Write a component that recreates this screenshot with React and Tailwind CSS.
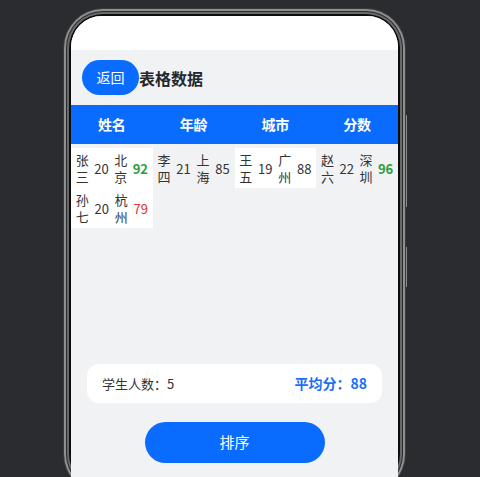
const rows = [
  { name: '张三', age: 20, city: '北京', score: 92 },
  { name: '李四', age: 21, city: '上海', score: 85 },
  { name: '王五', age: 19, city: '广州', score: 88 },
  { name: '赵六', age: 22, city: '深圳', score: 96 },
  { name: '孙七', age: 20, city: '杭州', score: 79 },
];

const font = { fontFamily: '"Noto Sans CJK SC", "Noto Sans", sans-serif' };

function scoreClass(s) {
  if (s >= 90) return 'text-[#2a9d3f] font-bold';
  if (s < 80) return 'text-[#e5322d]';
  return 'text-[#333]';
}

export default function App() {
  const avg = Math.round(rows.reduce((a, r) => a + r.score, 0) / rows.length);

  return (
    <div className="w-[480px] h-[477px] bg-[#2b2c30] overflow-hidden pt-[8px]" style={font}>
      <div className="relative ml-[63px] w-[343px]">
        {/* side keys */}
        <div className="absolute right-[-1px] top-[107px] w-[1px] h-[92px] bg-[#8a8b8e]" />
        <div className="absolute right-[-1px] top-[239px] w-[1px] h-[40px] bg-[#8a8b8e]" />

        <div className="rounded-[40px] p-[1px] bg-[#3a3b3e]">
          <div className="rounded-[39px] p-[2px] bg-[#8e8f91]">
            <div className="rounded-[37px] p-[1px] bg-[#2a2a2b]">
              <div className="rounded-[36px] p-[2px] bg-[#6a6a6c]">
                <div className="rounded-[34px] p-[2px] bg-[#0d0d0d]">
                  <div className="rounded-t-[31px] overflow-hidden bg-[#f1f2f4] h-[470px]">
                    <div className="h-[34px] bg-white" />

                    <div className="flex items-center mt-[10px] px-[11px]">
                      <button className="h-[35px] w-[57px] rounded-full bg-[#0a6cff] text-white text-[14px]">返回</button>
                      <span className="text-[16px] font-bold text-[#24272b]">表格数据</span>
                    </div>

                    <div className="mt-[10px] h-[39px] bg-[#0a6cff] grid grid-cols-4 items-center">
                      {['姓名', '年龄', '城市', '分数'].map((h) => (
                        <div key={h} className="text-center text-white text-[14px] font-bold">{h}</div>
                      ))}
                    </div>

                    <div className="mt-[4px] grid grid-cols-4">
                      {rows.map((r, i) => (
                        <div
                          key={r.name}
                          className={`h-[40px] flex items-center justify-around px-[2px] text-[13px] leading-[17px] text-[#333] ${i % 2 === 0 ? 'bg-white' : ''}`}
                        >
                          <span className="w-[13px] break-all">{r.name}</span>
                          <span>{r.age}</span>
                          <span className="w-[13px] break-all">{r.city}</span>
                          <span className={scoreClass(r.score)}>{r.score}</span>
                        </div>
                      ))}
                    </div>

                    <div className="mx-[16px] mt-[136px] h-[39px] rounded-[12px] bg-white flex items-center justify-between px-[15px]">
                      <span className="text-[13px] text-[#333]">学生人数：{rows.length}</span>
                      <span className="text-[14px] font-bold text-[#1a6ef5]">平均分：{avg}</span>
                    </div>

                    <button className="block mx-auto mt-[19px] w-[180px] h-[41px] rounded-full bg-[#0a6cff] text-white text-[15px]">排序</button>
                  </div>
                </div>
              </div>
            </div>
          </div>
        </div>
      </div>
    </div>
  );
}
